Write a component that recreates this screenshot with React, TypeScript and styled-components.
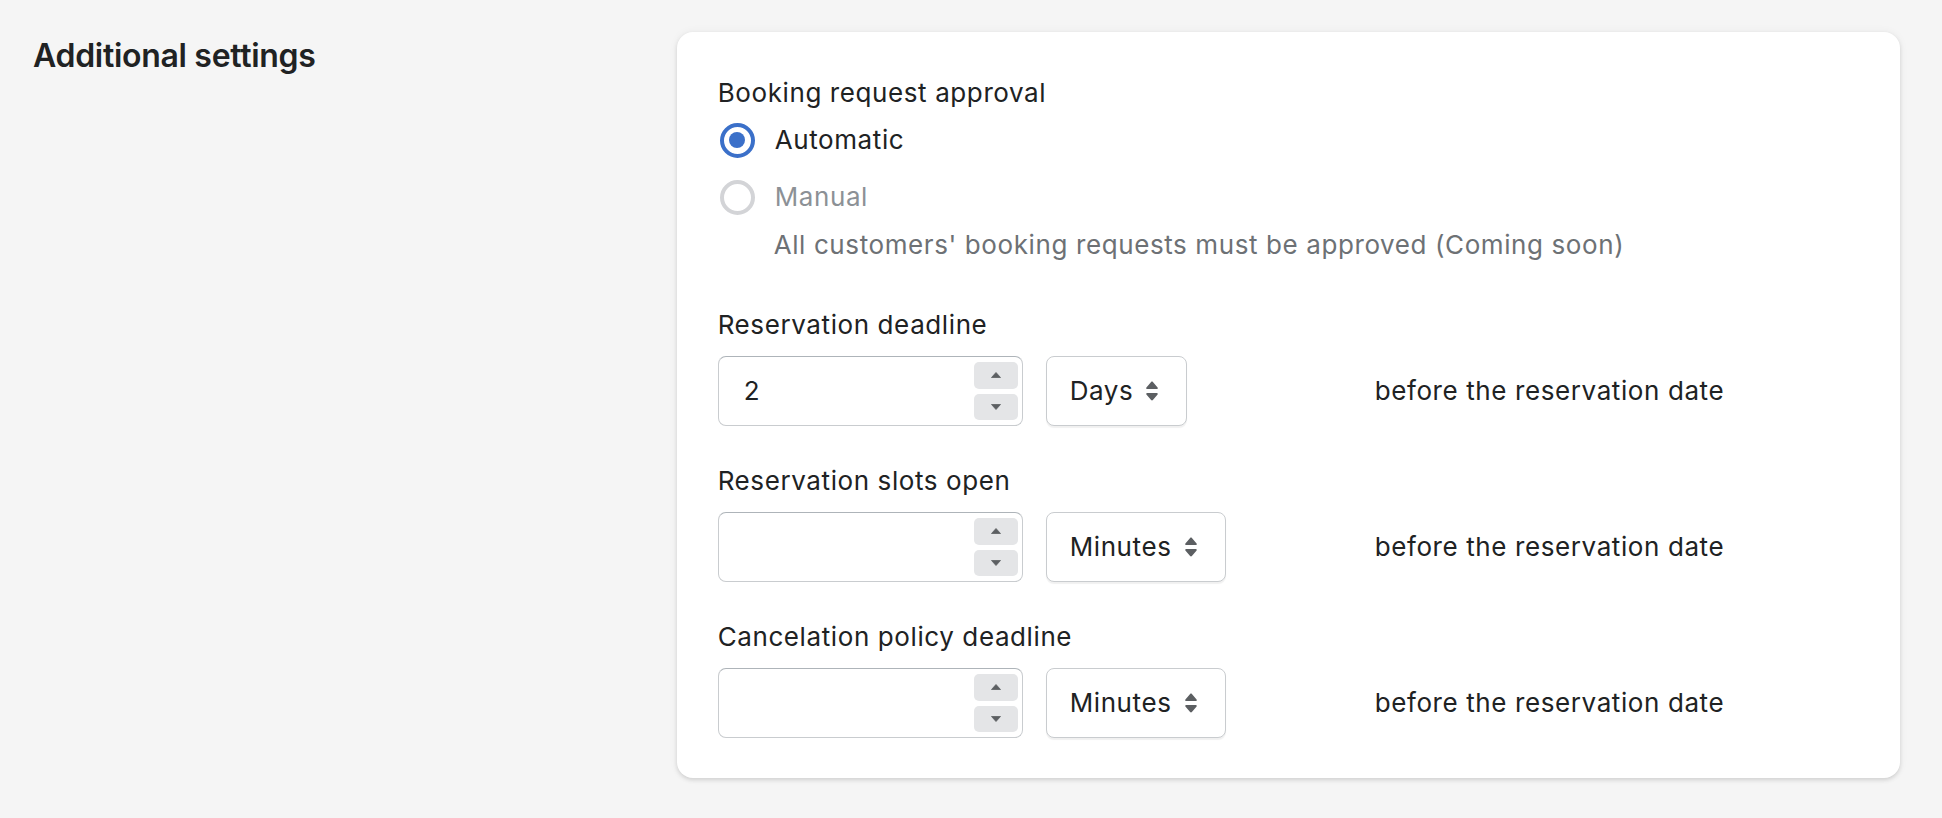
import React from "react";
import styled, { createGlobalStyle } from "styled-components";

const GlobalStyle = createGlobalStyle`
  html, body {
    margin: 0;
    padding: 0;
    background: #f5f5f5;
  }
  body {
    font-family: Inter, "Noto Sans", "Liberation Sans", sans-serif;
    color: #202223;
    -webkit-font-smoothing: antialiased;
  }
  * { box-sizing: border-box; }
`;

const Page = styled.div`
  display: grid;
  grid-template-columns: 1fr 2fr;
  column-gap: 32px;
  padding: 32px 42px 38px 33px;
  align-items: start;
`;

const Heading = styled.h2`
  margin: 0;
  font-size: 32px;
  line-height: 48px;
  font-weight: 600;
  letter-spacing: -0.3px;
  color: #202223;
`;

const Card = styled.section`
  background: #ffffff;
  border-radius: 16px;
  box-shadow: 0 0 10px rgba(23, 24, 24, 0.05), 0 2px 4px rgba(0, 0, 0, 0.13);
  padding: 41px 41px 40px 41px;
  display: flex;
  flex-direction: column;
  font-size: 26px;
  line-height: 40px;
  letter-spacing: 0.6px;
`;

const ChoiceSection = styled.div`
  display: flex;
  flex-direction: column;
  margin-bottom: 40px;
`;

const Label = styled.div<{ $gap?: number }>`
  color: #202223;
  margin-bottom: ${(p) => p.$gap ?? 11}px;
`;

const Choices = styled.div`
  display: flex;
  flex-direction: column;
  gap: 17px;
`;

const RadioRow = styled.label<{ $disabled?: boolean }>`
  display: flex;
  align-items: center;
  gap: 20px;
  padding-left: 2px;
  height: 40px;
  color: ${(p) => (p.$disabled ? "#8c9196" : "#202223")};
`;

const RadioCircle = styled.span<{ $checked?: boolean }>`
  width: 35px;
  height: 35px;
  border-radius: 50%;
  border: 4px solid ${(p) => (p.$checked ? "#3b70c9" : "#d3d4d7")};
  display: flex;
  align-items: center;
  justify-content: center;
  flex: none;
  &::after {
    content: "";
    width: 16px;
    height: 16px;
    border-radius: 50%;
    background: ${(p) => (p.$checked ? "#3b70c9" : "transparent")};
  }
`;

const HelpText = styled.div`
  margin-top: 8px;
  padding-left: 56px;
  color: #6d7175;
`;

const Fields = styled.div`
  display: flex;
  flex-direction: column;
  gap: 35px;
`;

const Field = styled.div`
  display: flex;
  flex-direction: column;
`;

const FieldRow = styled.div`
  display: grid;
  grid-template-columns: 305px 306px 1fr;
  column-gap: 23px;
  align-items: center;
`;

const NumberInput = styled.div`
  height: 70px;
  border: 1px solid #c9cccf;
  border-top-color: #aeb4b9;
  border-radius: 8px;
  background: #fff;
  display: flex;
  align-items: center;
  padding: 5px 4px 5px 25px;
`;

const Value = styled.span`
  flex: 1;
  color: #202223;
`;

const Spinner = styled.div`
  width: 44px;
  align-self: stretch;
  display: flex;
  flex-direction: column;
  gap: 5px;
`;

const SpinButton = styled.div`
  flex: 1;
  background: #e4e5e7;
  border-radius: 5px;
  display: flex;
  align-items: center;
  justify-content: center;
`;

const Select = styled.div`
  justify-self: start;
  height: 70px;
  border: 1px solid #c9cccf;
  border-radius: 8px;
  background: #fff;
  box-shadow: 0 2px 1px rgba(0, 0, 0, 0.06);
  display: flex;
  align-items: center;
  gap: 12px;
  padding: 0 27px 0 23px;
  color: #202223;
`;

const Suffix = styled.span`
  color: #202223;
`;

const Triangle = ({ down }: { down?: boolean }) => (
  <svg width="10" height="6" viewBox="0 0 10 6" aria-hidden>
    <path
      d={down ? "M0.5 0.5 H9.5 L5 5.5 Z" : "M0.5 5.5 H9.5 L5 0.5 Z"}
      fill="#5c5f62"
      stroke="#5c5f62"
      strokeWidth="0.8"
      strokeLinejoin="round"
    />
  </svg>
);

const SelectIcon = () => (
  <svg width="14" height="20" viewBox="0 0 14 20" aria-hidden>
    <path
      d="M2.2 8 H11.8 C12.7 8 13.1 7.1 12.6 6.4 L7.9 1 C7.4 0.4 6.6 0.4 6.1 1 L1.4 6.4 C0.9 7.1 1.3 8 2.2 8 Z"
      fill="#5c5f62"
    />
    <path
      d="M2.2 12 H11.8 C12.7 12 13.1 12.9 12.6 13.6 L7.9 19 C7.4 19.6 6.6 19.6 6.1 19 L1.4 13.6 C0.9 12.9 1.3 12 2.2 12 Z"
      fill="#5c5f62"
    />
  </svg>
);

type FieldData = { label: string; value: string; unit: string };

const fields: FieldData[] = [
  { label: "Reservation deadline", value: "2", unit: "Days" },
  { label: "Reservation slots open", value: "", unit: "Minutes" },
  { label: "Cancelation policy deadline", value: "", unit: "Minutes" },
];

export default function App() {
  return (
    <>
      <GlobalStyle />
      <Page>
        <Heading>Additional settings</Heading>
        <Card>
          <ChoiceSection>
            <Label $gap={7}>Booking request approval</Label>
            <Choices>
              <RadioRow>
                <RadioCircle $checked />
                Automatic
              </RadioRow>
              <RadioRow $disabled>
                <RadioCircle />
                Manual
              </RadioRow>
            </Choices>
            <HelpText>
              All customers' booking requests must be approved (Coming soon)
            </HelpText>
          </ChoiceSection>
          <Fields>
            {fields.map((f) => (
              <Field key={f.label}>
                <Label>{f.label}</Label>
                <FieldRow>
                  <NumberInput>
                    <Value>{f.value}</Value>
                    <Spinner>
                      <SpinButton>
                        <Triangle />
                      </SpinButton>
                      <SpinButton>
                        <Triangle down />
                      </SpinButton>
                    </Spinner>
                  </NumberInput>
                  <Select>
                    {f.unit}
                    <SelectIcon />
                  </Select>
                  <Suffix>before the reservation date</Suffix>
                </FieldRow>
              </Field>
            ))}
          </Fields>
        </Card>
      </Page>
    </>
  );
}
